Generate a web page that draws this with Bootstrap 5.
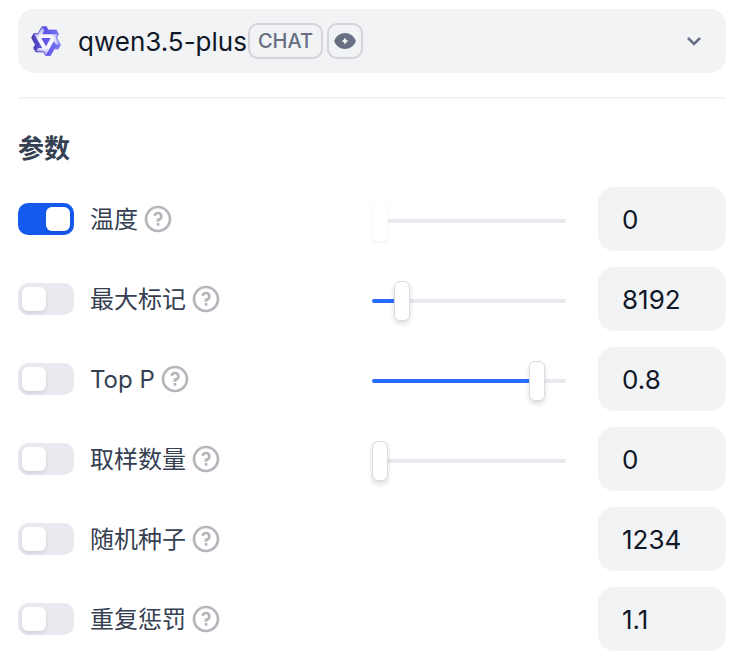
<!DOCTYPE html>
<html lang="zh-CN">
<head>
<meta charset="utf-8">
<meta name="viewport" content="width=device-width, initial-scale=1">
<title>模型参数</title>
<link href="https://cdn.jsdelivr.net/npm/bootstrap@5.3.0/dist/css/bootstrap.min.css" rel="stylesheet">
<style>
  body { font-family: Inter, "Noto Sans CJK SC", sans-serif; color: #354052; background: #fff; }
  .panel { padding: 9px 16px 12px 18px; }
  .model-picker { min-height: 64px; padding: 0 16px 0 12px; border-radius: 16px; background: #f1f3f5; color: #101828; font-size: 26px; line-height: 36px; }
  .model-name { margin-left: 16px; margin-right: 1px; padding-top: 2px; }
  .tag { height: 36px; border: 2px solid #d2d4d8; border-radius: 10px; color: #676f83; font-size: 20px; line-height: 32px; font-weight: 500; padding: 0 8px; }
  .tag-icon { padding: 0 4px; margin-left: 4px; }
  .rule { height: 2px; margin: 24px 0 32px; background: #f2f3f5; }
  .section-title { font-size: 26px; line-height: 36px; font-weight: 700; margin: 0 0 20px; }
  .param-list { gap: 16px; }
  .param { min-height: 64px; }
  .param-label { font-size: 24px; line-height: 32px; margin: 0 4px 0 16px; padding-top: 2px; }
  .help { color: #b4b6bb; line-height: 0; }
  .toggle { appearance: none; flex: none; width: 56px; height: 32px; margin: 0; padding: 4px; border-radius: 10px; background: #e9eaf0; cursor: pointer; }
  .toggle::before { content: ""; display: block; width: 24px; height: 24px; border-radius: 6px; background: #fff; box-shadow: 0 2px 4px rgba(16,24,40,.12); }
  .toggle:checked { background: #155aef; }
  .toggle:checked::before { margin-left: auto; }
  .slider { appearance: none; flex: none; width: 194px; height: 40px; margin: 4px 32px 0 0; background: transparent; }
  .slider::-webkit-slider-runnable-track { height: 4px; border-radius: 2px; background: linear-gradient(#296dff, #296dff) 0 / var(--fill) 100% no-repeat #e9eaf0; }
  .slider::-webkit-slider-thumb { appearance: none; width: 16px; height: 40px; margin-top: -18px; border: 1px solid #dcdcde; border-radius: 6px; background: #fff; box-shadow: 0 3px 5px rgba(16,24,40,.14); }
  .slider-min::-webkit-slider-thumb { border-color: #fff; box-shadow: 0 1px 3px rgba(16,24,40,.07); }
  .value-box { flex: none; width: 128px; height: 64px; padding: 0 24px; border: 0; border-radius: 16px; background: #f1f3f5; color: #101828; font-size: 26px; line-height: 36px; }
</style>
</head>
<body>
<svg class="d-none" aria-hidden="true">
  <symbol id="help" viewBox="0 0 24 24"><path fill="currentColor" d="M12 22C6.477 22 2 17.523 2 12S6.477 2 12 2s10 4.477 10 10-4.477 10-10 10zm0-2a8 8 0 1 0 0-16 8 8 0 0 0 0 16zm-1-5h2v2h-2v-2zm2-1.645V14h-2v-1.5a1 1 0 0 1 1-1 1.5 1.5 0 1 0-1.471-1.794l-1.962-.393A3.501 3.501 0 1 1 13 13.355z"/></symbol>
</svg>
<main class="panel">
  <button type="button" class="model-picker btn w-100 d-flex align-items-center text-start border-0">
    <svg width="32" height="32" viewBox="0 0 24 24" aria-hidden="true">
      <defs>
        <linearGradient id="brand" x1="0" y1="0" x2="1" y2="0"><stop offset="0" stop-color="#4a3fae"/><stop offset=".5" stop-color="#6157e6"/><stop offset="1" stop-color="#7577f5"/></linearGradient>
        <radialGradient id="arms" gradientUnits="userSpaceOnUse" cx="12" cy="12" r="11"><stop offset=".5" stop-color="#f6f6ff"/><stop offset="1" stop-color="#9694ee"/></radialGradient>
      </defs>
      <path fill="url(#arms)" d="M8.700 1.400H12L13.700 3.500H19.500L21.500 7 20.100 9.800 23 15 21.200 18.400H18.200L15.200 23.200H11.500L9.900 20.500H4.500L2.300 17.500 3.800 14.600 1 9.600 3 6.200H6z"/>
      <path fill="url(#brand)" d="M12.604 1.34c.393.69.784 1.382 1.174 2.075a.18.18 0 00.157.091h5.552c.174 0 .322.11.446.327l1.454 2.57c.19.337.24.478.024.837-.26.43-.513.864-.76 1.3l-.367.658c-.106.196-.223.28-.04.512l2.652 4.637c.172.301.111.494-.043.77-.437.785-.882 1.564-1.335 2.34-.159.272-.352.375-.68.37-.777-.016-1.552-.01-2.327.016a.099.099 0 00-.081.05 575.097 575.097 0 01-2.705 4.74c-.169.293-.38.363-.725.364-.997.003-2.002.004-3.017.002a.537.537 0 01-.465-.271l-1.335-2.323a.09.09 0 00-.083-.049H4.982c-.285.03-.553-.001-.805-.092l-1.603-2.77a.543.543 0 01-.002-.54l1.207-2.12a.198.198 0 000-.197 550.951 550.951 0 01-1.875-3.272l-.79-1.395c-.16-.31-.173-.496.095-.965.465-.813.927-1.625 1.387-2.436.132-.234.304-.334.584-.335a338.3 338.3 0 012.589-.001.124.124 0 00.107-.063l2.806-4.895a.488.488 0 01.422-.246c.524-.001 1.053 0 1.583-.006L11.704 1c.341-.003.724.032.9.34zm-3.432.403a.06.06 0 00-.052.03L6.254 6.788a.157.157 0 01-.135.078H3.253c-.056 0-.07.025-.041.074l5.81 10.156c.025.042.013.062-.034.063l-2.795.015a.218.218 0 00-.2.116l-1.32 2.31c-.044.078-.021.118.068.118l5.716.008c.046 0 .08.02.104.061l1.403 2.454c.046.081.092.082.139 0l5.006-8.76.783-1.382a.055.055 0 01.096 0l1.424 2.53a.122.122 0 00.107.062l2.763-.02a.04.04 0 00.035-.02.041.041 0 000-.04l-2.9-5.086a.108.108 0 010-.113l.293-.507 1.12-1.977c.024-.041.012-.062-.035-.062H9.2c-.059 0-.073-.026-.043-.077l1.434-2.505a.107.107 0 000-.114L9.225 1.774a.06.06 0 00-.053-.031zm6.29 8.02c.046 0 .058.02.034.06l-.832 1.465-2.613 4.585a.056.056 0 01-.05.029.058.058 0 01-.05-.029L8.498 9.841c-.02-.034-.01-.052.028-.054l.216-.012 6.722-.012z"/>
    </svg>
    <span class="model-name">qwen3.5-plus</span>
    <span class="tag">CHAT</span>
    <span class="tag tag-icon d-flex align-items-center">
      <svg width="24" height="24" viewBox="0 0 24 24" role="img" aria-label="视觉"><path fill="#676f83" fill-rule="evenodd" d="M12 4C17 4 20.500 7 22.500 11Q23 12 22.500 13C20.500 17 17 20 12 20S3.500 17 1.500 13Q1 12 1.500 11C3.500 7 7 4 12 4zm0 4.500q-.7 2.800-3.500 3.500 2.800.7 3.500 3.500.7-2.800 3.500-3.500-2.800-.7-3.500-3.500z"/></svg>
    </span>
    <svg class="ms-auto" width="32" height="32" viewBox="0 0 32 32" fill="none" stroke="#676f83" stroke-width="2.500" aria-hidden="true"><path d="m10 13 6 6 6-6"/></svg>
  </button>
  <div class="rule"></div>
  <h1 class="section-title">参数</h1>
  <div class="param-list d-flex flex-column">
    <div class="param d-flex align-items-center">
      <input class="toggle" type="checkbox" role="switch" id="t1" checked>
      <label class="param-label" for="t1">温度</label>
      <button type="button" class="help btn p-0 border-0" aria-label="温度说明"><svg width="32" height="32"><use href="#help"/></svg></button>
      <input class="slider slider-min ms-auto" type="range" min="0" max="200" value="0" aria-label="温度" style="--fill:0%">
      <input class="value-box" type="text" value="0" aria-label="温度数值">
    </div>
    <div class="param d-flex align-items-center">
      <input class="toggle" type="checkbox" role="switch" id="t2">
      <label class="param-label" for="t2">最大标记</label>
      <button type="button" class="help btn p-0 border-0" aria-label="最大标记说明"><svg width="32" height="32"><use href="#help"/></svg></button>
      <input class="slider ms-auto" type="range" min="0" max="65536" value="8192" aria-label="最大标记" style="--fill:13%">
      <input class="value-box" type="text" value="8192" aria-label="最大标记数值">
    </div>
    <div class="param d-flex align-items-center">
      <input class="toggle" type="checkbox" role="switch" id="t3">
      <label class="param-label" for="t3">Top P</label>
      <button type="button" class="help btn p-0 border-0" aria-label="Top P 说明"><svg width="32" height="32"><use href="#help"/></svg></button>
      <input class="slider ms-auto" type="range" min="0" max="100" value="88" aria-label="Top P" style="--fill:84%">
      <input class="value-box" type="text" value="0.8" aria-label="Top P 数值">
    </div>
    <div class="param d-flex align-items-center">
      <input class="toggle" type="checkbox" role="switch" id="t4">
      <label class="param-label" for="t4">取样数量</label>
      <button type="button" class="help btn p-0 border-0" aria-label="取样数量说明"><svg width="32" height="32"><use href="#help"/></svg></button>
      <input class="slider ms-auto" type="range" min="0" max="100" value="0" aria-label="取样数量" style="--fill:0%">
      <input class="value-box" type="text" value="0" aria-label="取样数量数值">
    </div>
    <div class="param d-flex align-items-center">
      <input class="toggle" type="checkbox" role="switch" id="t5">
      <label class="param-label" for="t5">随机种子</label>
      <button type="button" class="help btn p-0 border-0" aria-label="随机种子说明"><svg width="32" height="32"><use href="#help"/></svg></button>
      <input class="value-box ms-auto" type="text" value="1234" aria-label="随机种子数值">
    </div>
    <div class="param d-flex align-items-center">
      <input class="toggle" type="checkbox" role="switch" id="t6">
      <label class="param-label" for="t6">重复惩罚</label>
      <button type="button" class="help btn p-0 border-0" aria-label="重复惩罚说明"><svg width="32" height="32"><use href="#help"/></svg></button>
      <input class="value-box ms-auto" type="text" value="1.1" aria-label="重复惩罚数值">
    </div>
  </div>
</main>
<script src="https://cdn.jsdelivr.net/npm/bootstrap@5.3.0/dist/js/bootstrap.bundle.min.js"></script>
</body>
</html>
